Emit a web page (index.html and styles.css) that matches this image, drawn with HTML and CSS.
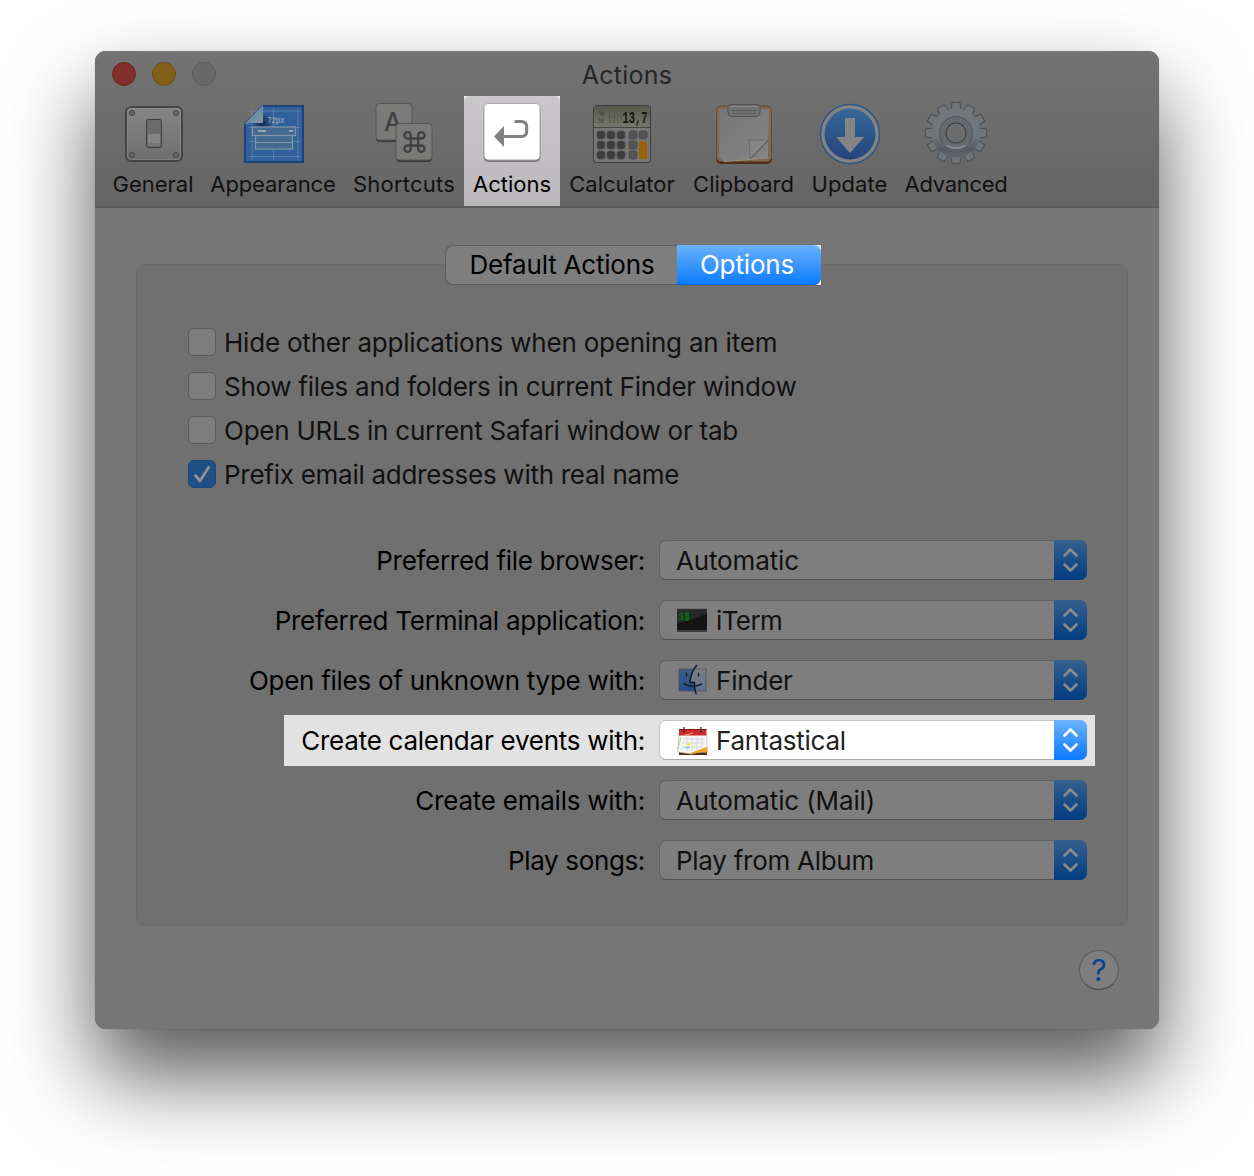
FILE: index.html
```html
<!DOCTYPE html>
<html lang="en">
<head>
<meta charset="utf-8">
<title>Actions</title>
<link rel="stylesheet" href="styles.css">
</head>
<body>
<svg width="0" height="0" class="defs" aria-hidden="true">
  <defs>
    <linearGradient id="plate" x1="0" y1="0" x2="0" y2="1"><stop offset="0" stop-color="#858585"/><stop offset="1" stop-color="#6e6e6e"/></linearGradient>
    <linearGradient id="fold" x1="0" y1="0" x2="1" y2="1"><stop offset="0.3" stop-color="#5c84a8"/><stop offset="1" stop-color="#8c989c"/></linearGradient>
    <linearGradient id="lcd" x1="0" y1="0" x2="0" y2="1"><stop offset="0" stop-color="#55574b"/><stop offset="1" stop-color="#74776a"/></linearGradient>
    <linearGradient id="blue" x1="0" y1="0" x2="0" y2="1"><stop offset="0" stop-color="#356799"/><stop offset="1" stop-color="#25457c"/></linearGradient>
    <linearGradient id="steel" gradientUnits="userSpaceOnUse" x1="0" y1="102" x2="0" y2="164"><stop offset="0" stop-color="#76787b"/><stop offset=".55" stop-color="#6f757b"/><stop offset=".75" stop-color="#585d65"/><stop offset="1" stop-color="#686b6f"/></linearGradient>
    <linearGradient id="sheet" x1="0" y1="0" x2="1" y2="1"><stop offset="0" stop-color="#757575"/><stop offset="1" stop-color="#868686"/></linearGradient>
    <linearGradient id="face" x1="0" y1="0" x2="0" y2="1"><stop offset="0" stop-color="#405d84"/><stop offset="1" stop-color="#294f88"/></linearGradient>
    <linearGradient id="face2" x1="0" y1="0" x2="0" y2="1"><stop offset="0" stop-color="#7a8084"/><stop offset="1" stop-color="#5c7290"/></linearGradient>
    <radialGradient id="shade"><stop offset="0" stop-color="#0c2444" stop-opacity=".9"/><stop offset="1" stop-color="#0c2444" stop-opacity="0"/></radialGradient>
    <symbol id="chevrons" viewBox="0 0 33 40"><path d="M10.500 15.500L16.500 9.500L22.500 15.500M10.500 24.500L16.500 30.500L22.500 24.500" fill="none" stroke="currentColor" stroke-width="2.600" stroke-linecap="round" stroke-linejoin="round"/></symbol>
  </defs>
</svg>
<main class="window">
  <header class="titlebar">
    <div class="caption">
      <div class="lights"><i class="light red"></i><i class="light amber"></i><i class="light idle"></i></div>
      <h1 class="title">Actions</h1>
    </div>
    <nav class="toolbar">
      <a class="tool general">
        <svg class="icon" viewBox="117 98 72 72">
          <rect x="126" y="107" width="56" height="54" rx="5" fill="url(#plate)" stroke="#454545" stroke-width="2"/>
          <rect x="127.500" y="108.500" width="53" height="51" rx="4" fill="none" stroke="#909090" stroke-opacity=".5"/>
          <g fill="#666" stroke="#484848"><circle cx="132" cy="113" r="2.600"/><circle cx="176" cy="113" r="2.600"/><circle cx="132" cy="155" r="2.600"/><circle cx="176" cy="155" r="2.600"/></g>
          <rect x="146.500" y="119.500" width="15" height="28" rx="2" fill="#6b6b6b" stroke="#3c3c3c"/>
          <path d="M148 134h12v11h-12z" fill="#858585"/><path d="M148 143h12v3h-12z" fill="#777"/>
        </svg>
        <span class="name">General</span></a>
      <a class="tool appearance">
        <svg class="icon" viewBox="237 98 72 72">
          <path d="M263 106H303V162H245V124z" fill="#32609a" stroke="#1d417d" stroke-width="2"/>
          <path d="M252 111V160M273.500 108V160M298 108V160M249 111H301M249 127.500H301M249 141.500H301M249 156.500H301" stroke="#6b8cab" stroke-opacity=".65" fill="none"/>
          <circle cx="262" cy="123" r="11" fill="url(#shade)"/>
          <path d="M244 124.500L263 105V123H250z" fill="url(#fold)"/>
          <g fill="#456a92" stroke="#8497a8" stroke-width="1.200"><rect x="255.500" y="135" width="37" height="14"/><path d="M255.500 142.500h37"/><rect x="252.500" y="127" width="43" height="8.500"/></g>
          <path d="M258 131h8M289 131h4" stroke="#9aa" stroke-width="2"/>
          <text x="267.500" y="122.500" class="px" textLength="17" lengthAdjust="spacingAndGlyphs">72px</text>
        </svg>
        <span class="name">Appearance</span></a>
      <a class="tool shortcuts">
        <svg class="icon" viewBox="368 98 72 72">
          <rect x="376" y="105" width="36" height="37" rx="4" fill="#3b3b3b"/><rect x="376" y="103.500" width="36" height="36.500" rx="3.500" fill="#7a7a78" stroke="#555"/>
          <text x="384" y="131" class="keycap">A</text>
          <rect x="396" y="125" width="36" height="37" rx="4" fill="#3b3b3b"/><rect x="396" y="123.500" width="36" height="36.500" rx="3.500" fill="#7a7a78" stroke="#555"/>
          <path d="M410.800 136v-.7a3.200 3.200 0 1 0-3.200 3.200h13.800a3.200 3.200 0 1 0-3.200-3.200v13.400a3.200 3.200 0 1 0 3.200-3.200h-13.800a3.200 3.200 0 1 0 3.200 3.200z" fill="none" stroke="#404040" stroke-width="2.300"/>
        </svg>
        <span class="name">Shortcuts</span></a>
      <a class="tool actions selected">
        <svg class="icon" viewBox="476 98 72 72">
          <rect x="483.500" y="106" width="57" height="56" rx="5" fill="#777578"/><rect x="484" y="103.500" width="56" height="56.500" rx="4.500" fill="#fff" stroke="#aaa8ab"/>
          <path d="M503 136.500H521.500Q526.700 136.500 526.700 131V127Q526.700 121.500 521 121.500H514.500" fill="none" stroke="#818181" stroke-width="3"/><path d="M494 136.500L504 126V147z" fill="#818181"/>
        </svg>
        <span class="name">Actions</span></a>
      <a class="tool calculator">
        <svg class="icon" viewBox="586 98 72 72">
          <rect x="593.500" y="105.500" width="57" height="57" rx="3" fill="#777" stroke="#3d3d3d"/>
          <path d="M594 108q0-2 2-2h52q2 0 2 2v19h-56z" fill="url(#lcd)"/><path d="M594 127.500h56" stroke="#454545"/>
          <text x="598.500" y="115.500" class="tiny">%</text><text x="598.500" y="122.500" class="tiny">M</text>
          <path d="M609.500 111.500h5v10.500h-5zM609.500 116.500h5M617.500 111.500h4v10.500h-4zM617.500 116.500h4" fill="none" stroke="#5a5c50"/>
          <text x="622.500" y="122.500" class="digits" textLength="25" lengthAdjust="spacingAndGlyphs">13,7</text>
          <g fill="#3d3d3d" stroke="#505050" stroke-width=".8"><rect x="597" y="131" width="8" height="8" rx="2.300"/><rect x="607" y="131" width="8" height="8" rx="2.300"/><rect x="617" y="131" width="8" height="8" rx="2.300"/><rect x="597" y="141" width="8" height="8" rx="2.300"/><rect x="607" y="141" width="8" height="8" rx="2.300"/><rect x="617" y="141" width="8" height="8" rx="2.300"/><rect x="597" y="151" width="8" height="8" rx="2.300"/><rect x="607" y="151" width="8" height="8" rx="2.300"/><rect x="617" y="151" width="8" height="8" rx="2.300"/></g>
          <g fill="#555" stroke="#484848" stroke-width=".8"><rect x="629" y="131" width="8" height="8" rx="2.300"/><rect x="639" y="131" width="8" height="8" rx="2.300"/><rect x="629" y="141" width="8" height="8" rx="2.300"/><rect x="629" y="151" width="8" height="8" rx="2.300"/></g>
          <rect x="639" y="141" width="8" height="18" rx="2.500" fill="#986008"/>
        </svg>
        <span class="name">Calculator</span></a>
      <a class="tool clipboard">
        <svg class="icon" viewBox="708 98 72 72">
          <rect x="716" y="107" width="56" height="57" rx="5" fill="#4c301c"/><rect x="716.500" y="106" width="55" height="55.500" rx="4.500" fill="#80674c" stroke="#654c36"/>
          <path d="M719 109L769 109L768 158L724 161.500L719 157z" fill="url(#sheet)"/><path d="M724 161.500L769 158" stroke="#9a8d7c"/>
          <path d="M768.500 140L750 158.500L749 139.500q9 1 19.500 .5z" fill="#858585" stroke="#666" stroke-width=".8"/>
          <path d="M768.500 140.500L751 158.500" stroke="#555"/>
          <path d="M730 104.500h28q2 0 2 2v6q0 4-4 4h-24q-4 0-4-4v-6q0-2 2-2z" fill="#717171" stroke="#525252"/><path d="M732 110.500h24M732 113.500h24" stroke="#5a5a5a"/><path d="M731 106.500h26" stroke="#8a8a8a"/>
        </svg>
        <span class="name">Clipboard</span></a>
      <a class="tool update">
        <svg class="icon" viewBox="814 98 72 72">
          <circle cx="850" cy="134" r="29.500" fill="#838383" stroke="#2f5786" stroke-width="1.500"/><circle cx="850" cy="134" r="25.500" fill="url(#blue)"/>
          <path d="M845 118h10v19h9l-14 16l-14-16h9z" fill="#858585"/>
        </svg>
        <span class="name">Update</span></a>
      <a class="tool advanced">
        <svg class="icon" viewBox="920 98 72 72">
          <defs><path id="tooth" d="M951 111L952 102.300H960L961 111z"/></defs>
          <g fill="#70757a" stroke="#4a4c4f" stroke-width="1">
            <use href="#tooth"/><use href="#tooth" transform="rotate(30 956 133)"/><use href="#tooth" transform="rotate(60 956 133)"/><use href="#tooth" transform="rotate(90 956 133)"/><use href="#tooth" transform="rotate(120 956 133)"/><use href="#tooth" transform="rotate(150 956 133)"/><use href="#tooth" transform="rotate(180 956 133)"/><use href="#tooth" transform="rotate(210 956 133)"/><use href="#tooth" transform="rotate(240 956 133)"/><use href="#tooth" transform="rotate(270 956 133)"/><use href="#tooth" transform="rotate(300 956 133)"/><use href="#tooth" transform="rotate(330 956 133)"/>
          </g>
          <circle cx="956" cy="133" r="24.500" fill="url(#steel)"/>
          <circle cx="956" cy="133" r="16.500" fill="#666a6e" stroke="#4f5459" stroke-width="1"/>
          <path d="M943 143A16.500 16.500 0 0 0 969 143A24 24 0 0 1 943 143z" fill="#858a8e"/>
          <circle cx="956" cy="133" r="10" fill="#6d6d6d" stroke="#3e4246" stroke-width="1.200"/>
        </svg>
        <span class="name">Advanced</span></a>
    </nav>
  </header>
  <div class="content">
    <div class="tabs"><span class="tab"><b class="tab-default">Default Actions</b></span><span class="tab on"><b class="tab-options">Options</b></span></div>
    <section class="group">
      <div class="checks">
        <label class="check"><i class="box"></i><span class="c1">Hide other applications when opening an item</span></label>
        <label class="check"><i class="box"></i><span class="c2">Show files and folders in current Finder window</span></label>
        <label class="check"><i class="box"></i><span class="c3">Open URLs in current Safari window or tab</span></label>
        <label class="check"><i class="box ticked"><svg viewBox="0 0 28 28"><path d="M7.500 15.500L12 21L20.500 7.500" fill="none" stroke="#8d9298" stroke-width="2.800" stroke-linecap="round" stroke-linejoin="round"/></svg></i><span class="c4">Prefix email addresses with real name</span></label>
      </div>
      <div class="rows">
        <div class="row"><span class="label l1">Preferred file browser:</span><div class="select"><span class="value v1">Automatic</span><i class="knob"><svg><use href="#chevrons"/></svg></i></div></div>
        <div class="row"><span class="label l2">Preferred Terminal application:</span><div class="select">
          <svg class="app" viewBox="0 0 32 32"><path d="M1 4h30v25H1z" fill="#6d6d6d"/><path d="M1 5.500h30v21H1z" fill="#141414"/><path d="M1 20L31 10V5.500H1z" fill="#282828"/><path d="M1 27.500h30" stroke="#3b3b3b"/><path d="M1 28.700h30" stroke="#888"/><text x="2.500" y="16" class="prompt">$</text><rect x="9" y="8" width="4" height="9" rx="1" fill="#0b6610"/></svg>
          <span class="value v2">iTerm</span><i class="knob"><svg><use href="#chevrons"/></svg></i></div></div>
        <div class="row"><span class="label l3">Open files of unknown type with:</span><div class="select">
          <svg class="app" viewBox="0 0 32 32"><path d="M3 5h27v22H3z" fill="url(#face)"/><path d="M19 5h11v22H19q-1-4-.5-8H14Q14 11 19 5z" fill="url(#face2)"/><path d="M3 5h27v22H3z" fill="none" stroke="#4a5260" stroke-width=".8"/><path d="M20.500 1.500Q14.500 9 14 18.500H18.500Q18 24 20 29.500M8 20Q16.500 24.500 25.500 20M10.500 9.500v2.500M22.500 9.500v2.500" fill="none" stroke="#121820" stroke-width="1.400" stroke-linecap="round"/></svg>
          <span class="value v3">Finder</span><i class="knob"><svg><use href="#chevrons"/></svg></i></div></div>
        <div class="row lit"><span class="label l4">Create calendar events with:</span><div class="select">
          <svg class="app fantastical" viewBox="0 0 32 32"><path d="M3 27h28v3H3z" fill="#4d2d12"/><path d="M3 9h27.500l1 18q-12 0-16 2L1.500 27z" fill="#f5f6f4" stroke="#b4b0a4" stroke-width=".6"/><path d="M3 4h27.500v6.500H3z" fill="#ce292b"/><path d="M3 4.500h27.500" stroke="#8e1718"/><path d="M7 14h21M6 18h22M6 22h20M11 12v14M16 12v14M21 12v12M26 12v10" stroke="#d3d7dd" stroke-width=".9"/><path d="M11 18h3v4h-3z" fill="#ffe45e"/><path d="M9 22.500h5" stroke="#7fd0f4" stroke-width="1.500"/><path d="M2 24q2-8 3-12" stroke="#9adba1" fill="none"/><path d="M13 28.500Q24 24 31 22l.5 5.500Q24 26 18 28.500z" fill="#f5a51c"/><path d="M17 8L8 10.500" stroke="#ecb071"/><path d="M8 2v6M25 2v6" stroke="#353535" stroke-width="1.300"/></svg>
          <span class="value v4">Fantastical</span><i class="knob"><svg><use href="#chevrons"/></svg></i></div></div>
        <div class="row"><span class="label l5">Create emails with:</span><div class="select"><span class="value v5">Automatic (Mail)</span><i class="knob"><svg><use href="#chevrons"/></svg></i></div></div>
        <div class="row"><span class="label l6">Play songs:</span><div class="select"><span class="value v6">Play from Album</span><i class="knob"><svg><use href="#chevrons"/></svg></i></div></div>
      </div>
    </section>
    <button class="help">?</button>
  </div>
</main>
</body>
</html>
```
FILE: styles.css
```css
* { box-sizing: border-box; }
body {
  margin: 0;
  height: 1176px;
  overflow: hidden;
  padding: 51px 95px 0;
  background: #fff;
  font: 26px/40px Inter, "Liberation Sans", sans-serif;
  color: #111;
}
.defs { display: block; position: absolute; }
i { font-style: normal; }
.window {
  width: 1064px;
  height: 978px;
  border-radius: 11px;
  overflow: hidden;
  background: #767676;
  box-shadow: 0 0 1px rgba(0,0,0,.4), 0 46px 86px rgba(0,0,0,.66);
}
.titlebar {
  height: 157px;
  background: linear-gradient(#737373, #656565);
  border-top: 1px solid #7f7f7f;
  border-bottom: 2px solid #5b5b5b;
}
.caption { height: 44px; display: grid; grid-template-columns: 1fr auto 1fr; }
.lights { display: flex; gap: 16px; padding: 10px 0 0 17px; }
.light { width: 24px; height: 24px; border-radius: 50%; border: 1px solid; }
.red { background: #802e2b; border-color: #742420; }
.amber { background: #815f18; border-color: #725010; }
.idle { background: #686868; border-color: #5a5a5a; }
.title { margin: 0; font-size: 25px; line-height: 46px; font-weight: 400; color: #262626; letter-spacing: .25px; }
.toolbar { display: flex; padding-left: 9px; }
.tool { height: 110px; display: flex; flex-direction: column; align-items: center; padding-top: 2px; font-size: 22px; line-height: 32px; white-space: nowrap; }
.icon { width: 72px; height: 72px; flex: none; }
.general { width: 98px; }
.appearance { width: 142px; letter-spacing: -.12px; }
.shortcuts { width: 120px; letter-spacing: .2px; }
.actions { width: 96px; }
.calculator { width: 124px; }
.clipboard { width: 119px; }
.update { width: 93px; letter-spacing: .1px; }
.advanced { width: 120px; letter-spacing: -.3px; }
.name { margin-top: -2px; }
.selected {
  background:
    radial-gradient(circle at 100% 100%, transparent 5.500px, #e6e6e6 6.500px) 0 0 / 6px 6px no-repeat,
    radial-gradient(circle at 0 100%, transparent 5.500px, #e6e6e6 6.500px) 100% 0 / 6px 6px no-repeat,
    linear-gradient(#c9c7ca, #bab8bb);
  color: #000;
}
.px { font: 700 9px "Liberation Sans", sans-serif; fill: #8d9dad; letter-spacing: 0; }
.keycap { font: 500 25px Inter, sans-serif; fill: #404040; }
.tiny { font: 6.500px "Liberation Sans", sans-serif; fill: #3d3f36; }
.digits { font: 700 17px "Liberation Mono", monospace; fill: #15170f; }

.content { display: flex; flex-direction: column; padding: 37px 31px 0 41px; }
.tabs { display: flex; align-self: center; margin-left: 2px; position: relative; width: 376px; height: 40px; background: linear-gradient(#e6e6e6, #e6e6e6) right / 10px 100% no-repeat; }
.tab { width: 232px; background: #7e7e7e; border: 1px solid #5d5d5d; border-right: 0; border-radius: 8px 0 0 8px; text-align: center; line-height: 38px; color: #000; }
.tab b { font-weight: 400; }
.tab-default { letter-spacing: -.2px; margin-left: 1px; }
.tab-options { letter-spacing: -.15px; }
.tab.on { width: 144px; border: 0; border-radius: 0 8px 8px 0; background: linear-gradient(#6bb2fc, #0a7aff); color: #fff; line-height: 40px; padding-right: 4px; box-shadow: inset 0 -1px 0 #0564e8; }
.group { height: 662px; margin-top: -21px; border: 1px solid #6a6a6a; border-radius: 8px; background: #707070; padding: 57px 40px 0 51px; }
.checks { display: flex; flex-direction: column; gap: 4px; }
.check { display: flex; align-items: center; gap: 8px; height: 40px; white-space: nowrap; }
.check span { padding-top: 2px; }
.c1 { letter-spacing: -.21px; }
.c2 { letter-spacing: -.28px; }
.c3 { letter-spacing: -.24px; }
.c4 { letter-spacing: -.27px; }
.box { width: 28px; height: 28px; flex: none; border: 1px solid #5c5c5c; border-radius: 6px; background: #7e7e7e; }
.box svg { display: block; width: 28px; height: 28px; margin: -1px; }
.ticked { background: #204f86; border-color: #1c477c; }
.rows { display: flex; flex-direction: column; gap: 20px; margin-top: 46px; }
.row { display: flex; justify-content: flex-end; gap: 14px; height: 40px; white-space: nowrap; color: #111; }
.label { color: #000; line-height: 42px; }
.l1 { letter-spacing: -.3px; }
.l2 { letter-spacing: -.24px; }
.l3 { letter-spacing: -.28px; }
.l4 { letter-spacing: -.25px; }
.l5 { letter-spacing: -.24px; }
.l6 { letter-spacing: -.36px; }
.select { width: 428px; display: flex; align-items: center; height: 40px; border-radius: 7px; background: #7e7e7e; border: 1px solid #606060; border-bottom-color: #505050; padding-left: 16px; }
.value { line-height: 38px; padding-top: 2px; }
.v1 { letter-spacing: -.15px; }
.v2 { letter-spacing: -.6px; }
.v3 { letter-spacing: -.2px; }
.v4 { letter-spacing: -.23px; }
.v5 { letter-spacing: -.13px; }
.v6 { letter-spacing: -.27px; }
.app { width: 32px; height: 32px; flex: none; margin-right: 8px; }
.fantastical { margin-top: 2px; }
.knob { width: 33px; height: 40px; margin: -1px -1px -1px auto; border-radius: 0 7px 7px 0; background: linear-gradient(#34618f, #023c80); color: #8a8a8a; }
.knob svg { display: block; width: 33px; height: 40px; }
.lit { height: 51px; align-self: flex-end; background: #e2e2e2; padding: 5px 8px 6px 17px; margin: -5px -8px -6px 0; }
.lit .select { background: #fff; border-color: #c6c6c6; border-bottom-color: #ababab; color: #222; }
.lit .knob { background: linear-gradient(#6bb2fc, #0a7aff); color: #fff; }
.prompt { font: 700 10px "Liberation Mono", monospace; fill: #0b6610; }
.help { align-self: flex-end; margin: 24px 9px 0 0; width: 40px; height: 40px; padding: 0; border-radius: 50%; border: 1px solid #5c5c5c; border-bottom-color: #484848; background: #7e7e7e; color: #03428c; font: 400 30px/38px Inter, sans-serif; }
```
